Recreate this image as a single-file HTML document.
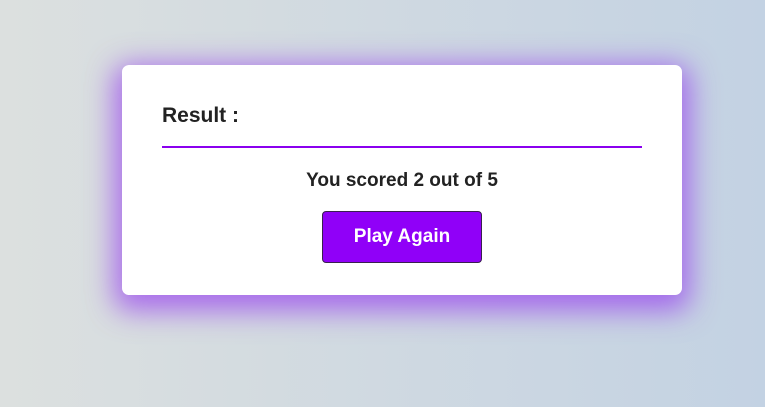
<!DOCTYPE html>
<html><head><style>
html,body{margin:0;padding:0;}
body{width:765px;height:407px;overflow:hidden;background:linear-gradient(to right,#dce0df,#c3d2e3);font-family:"Liberation Sans",sans-serif;position:relative;}
.card{position:absolute;left:122px;top:65px;width:560px;height:230px;background:#fff;border-radius:7px;box-shadow:0 8px 28px 8px rgba(150,60,240,0.7);}
.title{position:absolute;left:40px;top:39px;font-size:21px;font-weight:bold;color:#222;}
.line{position:absolute;left:40px;top:81px;width:480px;height:2px;background:#8a00ee;}
.score{position:absolute;left:0;width:560px;top:105px;text-align:center;font-size:19px;font-weight:bold;color:#222;}
.btn{position:absolute;left:200px;top:146px;width:160px;height:52px;box-sizing:border-box;background:#9000f8;border:1px solid #3a2050;border-radius:4px;color:#fff;font-size:19px;font-weight:bold;text-align:center;line-height:50px;}
</style></head><body>
<div class="card">
<div class="title">Result :</div>
<div class="line"></div>
<div class="score">You scored 2 out of 5</div>
<div class="btn">Play Again</div>
</div>
</body></html>
